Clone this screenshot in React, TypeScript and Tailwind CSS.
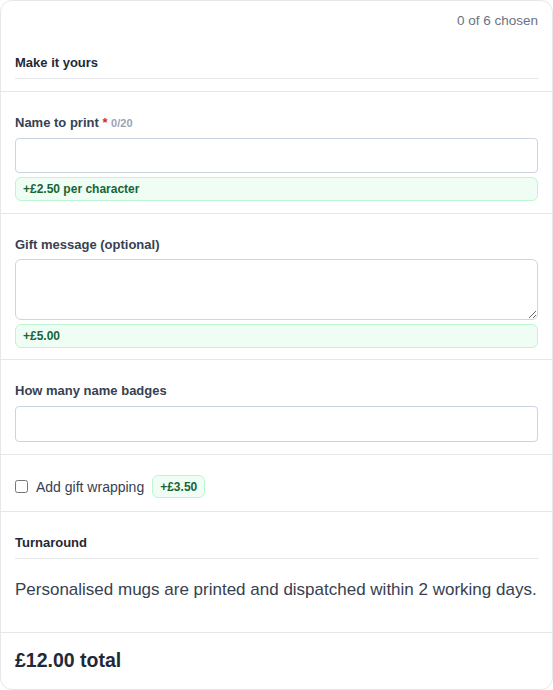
const Price = ({ children, block = false }: { children: React.ReactNode; block?: boolean }) => (
  <span
    className={`${
      block ? "mt-1 flex h-6 w-full items-center px-[7px]" : "inline-flex h-[23px] items-center px-[7px]"
    } rounded-md border border-[#bbf7d0] bg-[#f0fdf4] text-xs font-bold text-[#166534]`}
  >
    {children}
  </span>
);

export default function App() {
  return (
    <div className="bg-white font-['Liberation_Sans',Arial,sans-serif]">
      <div className="flex h-[690px] w-[553px] flex-col rounded-xl border border-[#e5e7eb] bg-white">
        {/* header */}
        <div className="border-b border-[#e5e7eb] px-[14px] pt-[10px] pb-3">
          <p className="text-right text-[13.5px] leading-5 text-[#6b7280]">0 of 6 chosen</p>
          <h2 className="mt-[23px] border-b border-[#e5e7eb] pb-[6px] text-[13px] font-bold leading-[18px] text-[#1f2937]">
            Make it yours
          </h2>
        </div>

        {/* name */}
        <div className="border-b border-[#e5e7eb] px-[14px] pt-[21px] pb-3">
          <label className="block text-[13px] font-bold leading-5 text-[#374151]">
            Name to print <span className="text-[#dc2626]">*</span>{" "}
            <span className="text-[11px] font-bold text-[#9ca3af]">0/20</span>
          </label>
          <input
            type="text"
            className="mt-[5px] block h-[35px] w-full rounded border border-[#cbd5e1] bg-white px-2 text-sm"
          />
          <Price block>+£2.50 per character</Price>
        </div>

        {/* gift message */}
        <div className="border-b border-[#e5e7eb] px-[14px] pt-[21px] pb-[11px]">
          <label className="block text-[13px] font-bold leading-5 text-[#374151]">Gift message (optional)</label>
          <textarea className="mt-1 block h-[61px] w-full rounded-md border border-[#d1d5db] bg-white px-2 text-sm" />
          <Price block>+£5.00</Price>
        </div>

        {/* badges */}
        <div className="border-b border-[#e5e7eb] px-[14px] pt-[21px] pb-3">
          <label className="block text-[13px] font-bold leading-5 text-[#374151]">How many name badges</label>
          <input
            type="number"
            className="mt-[5px] block h-9 w-full rounded border border-[#cbd5e1] bg-white px-2 text-sm"
          />
        </div>

        {/* wrapping */}
        <div className="flex items-center gap-2 border-b border-[#e5e7eb] px-[14px] pt-5 pb-[13px]">
          <label className="flex items-center gap-2 text-sm text-[#374151]">
            <input type="checkbox" className="h-[13px] w-[13px]" />
            Add gift wrapping
          </label>
          <Price>+£3.50</Price>
        </div>

        {/* turnaround */}
        <div className="border-b border-[#e5e7eb] px-[14px] pt-[22px] pb-7">
          <h3 className="border-b border-[#e5e7eb] pb-[6px] text-[13px] font-bold leading-[18px] text-[#1f2937]">
            Turnaround
          </h3>
          <p className="mt-[17px] text-[17px] leading-7 text-[#374151]">
            Personalised mugs are printed and dispatched within 2 working days.
          </p>
        </div>

        {/* total */}
        <div className="px-[14px] pt-[13px]">
          <p className="text-[19.5px] font-bold leading-7 text-[#1f2937]">£12.00 total</p>
        </div>
      </div>
    </div>
  );
}
